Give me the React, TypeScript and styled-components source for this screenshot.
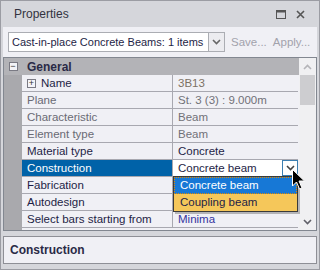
import React from 'react';
import styled, { createGlobalStyle } from 'styled-components';

const GlobalStyle = createGlobalStyle`
  html, body {
    margin: 0;
    padding: 0;
    background: #d5d6db;
  }
  * {
    box-sizing: border-box;
  }
`;

const Window = styled.div`
  position: relative;
  width: 320px;
  height: 270px;
  border: 1px solid #9b9ca3;
  background: #d5d6db;
  display: flex;
  flex-direction: column;
  font-family: 'Liberation Sans', Arial, sans-serif;
  font-size: 11px;
  color: #1e1e46;
  overflow: hidden;
`;

const TitleBar = styled.div`
  height: 26px;
  display: flex;
  align-items: center;
  justify-content: space-between;
  padding: 0 14px 0 13px;
`;

const Title = styled.span`
  font-size: 12px;
  color: #333340;
`;

const TitleButtons = styled.div`
  display: flex;
  align-items: center;
  gap: 10px;
`;

const Toolbar = styled.div`
  height: 30px;
  margin: 0 2px;
  background: #f0f0f5;
  display: flex;
  align-items: center;
  padding: 0 0 0 5px;
  gap: 6px;
`;

const Combo = styled.div`
  width: 217px;
  height: 20px;
  border: 1px solid #abadb3;
  background: #fff;
  display: flex;
  align-items: stretch;
`;

const ComboText = styled.span`
  flex: 1;
  padding-left: 3px;
  line-height: 18px;
  white-space: nowrap;
  overflow: hidden;
  color: #1e1e46;
`;

const ComboButton = styled.span`
  width: 16px;
  border-left: 1px solid #abadb3;
  background: #ececf0;
  display: flex;
  align-items: center;
  justify-content: center;
`;

const ToolLink = styled.span`
  color: #a2a2ac;
  font-size: 11.5px;
`;

const Grid = styled.div`
  margin: 0 2px;
  height: 174px;
  border: 1px solid #828790;
  background: #f0f0f5;
  display: flex;
  font-size: 11.5px;
`;

const GridBody = styled.div`
  flex: 1;
  display: flex;
  flex-direction: column;
  background: linear-gradient(to right, #a9a9ad 18px, #f0f0f5 18px);
`;

const CategoryRow = styled.div`
  height: 17px;
  display: flex;
  align-items: center;
  background: #b3b3b7;
`;

const CategoryGutter = styled.div`
  width: 18px;
  display: flex;
  justify-content: center;
`;

const Toggle = styled.span`
  width: 9px;
  height: 9px;
  border: 1px solid #7a7a84;
  background: #f4f4f8;
  display: flex;
  align-items: center;
  justify-content: center;
  font-size: 9px;
  line-height: 7px;
  color: #333;
`;

const CategoryTitle = styled.span`
  padding-left: 5px;
  font-weight: bold;
  font-size: 12px;
  color: #2a2a46;
`;

const Row = styled.div`
  height: 17px;
  display: flex;
`;

const Gutter = styled.div`
  width: 18px;
`;

const LabelCell = styled.div<{ $selected?: boolean; $readonly?: boolean }>`
  width: 151px;
  display: flex;
  align-items: center;
  gap: 5px;
  padding-left: 5px;
  border-right: 1px solid #a8a8b0;
  border-bottom: 1px solid #a8a8b0;
  background: ${p => (p.$selected ? '#0062a8' : '#f0f0f5')};
  color: ${p => (p.$selected ? '#ffffff' : p.$readonly ? '#6a6a74' : '#1e1e46')};
  white-space: nowrap;
`;

const ValueCell = styled.div<{ $color?: string; $editing?: boolean }>`
  position: relative;
  width: 125px;
  display: flex;
  align-items: center;
  justify-content: space-between;
  padding-left: 5px;
  border-bottom: 1px solid #a8a8b0;
  background: ${p => (p.$editing ? '#ffffff' : '#f0f0f5')};
  color: ${p => p.$color || '#1e1e46'};
  white-space: nowrap;
`;

const EditButton = styled.span`
  width: 16px;
  height: 16px;
  border: 1px solid #3c7fb1;
  background: #fff;
  display: flex;
  align-items: center;
  justify-content: center;
  align-self: flex-start;
`;

const DropList = styled.div`
  position: absolute;
  left: 0;
  top: 16px;
  width: 125px;
  border: 1px solid #3a3a3a;
  background: #f0f0f5;
  box-shadow: 2px 2px 0 rgba(0, 0, 0, 0.25);
  z-index: 5;
`;

const DropItem = styled.div<{ $active?: boolean }>`
  height: 17px;
  line-height: 15px;
  padding-left: 5px;
  color: ${p => (p.$active ? '#ffffff' : '#1e1e46')};
  background: ${p => (p.$active ? '#1778d6' : '#f5c75a')};
  border: 1px ${p => (p.$active ? 'dotted #e08a00' : 'solid #f5c75a')};
`;

const ScrollBar = styled.div`
  width: 17px;
  display: flex;
  flex-direction: column;
  background: #f0f0f2;
`;

const ScrollArrow = styled.div`
  height: 17px;
  display: flex;
  align-items: center;
  justify-content: center;
`;

const ScrollThumb = styled.div`
  height: 30px;
  margin: 0 1px;
  background: #cdcdd0;
`;

const ScrollTrack = styled.div`
  flex: 1;
`;

const Description = styled.div`
  margin: 5px 2px 0;
  height: 28px;
  border: 1px solid #8e8f96;
  background: #f0f0f5;
  display: flex;
  align-items: center;
  padding-left: 6px;
  font-weight: bold;
  font-size: 12px;
  color: #2a2a46;
`;

const Cursor = styled.svg`
  position: absolute;
  left: 291px;
  top: 168px;
  z-index: 10;
`;

const Chevron = ({ up, color = '#555' }: { up?: boolean; color?: string }) => (
  <svg width="9" height="6" viewBox="0 0 9 6">
    <path
      d={up ? 'M1 5 L4.5 1.5 L8 5' : 'M1 1 L4.5 4.5 L8 1'}
      fill="none"
      stroke={color}
      strokeWidth="1.6"
    />
  </svg>
);

type Prop = {
  label: string;
  value: string;
  readonly?: boolean;
  color?: string;
  expandable?: boolean;
};

const props: Prop[] = [
  { label: 'Name', value: '3B13', color: '#7d7264', expandable: true },
  { label: 'Plane', value: 'St. 3 (3) : 9.000m', readonly: true, color: '#707078' },
  { label: 'Characteristic', value: 'Beam', readonly: true, color: '#707078' },
  { label: 'Element type', value: 'Beam', readonly: true, color: '#707078' },
  { label: 'Material type', value: 'Concrete' },
  { label: 'Construction', value: 'Concrete beam' },
  { label: 'Fabrication', value: '' },
  { label: 'Autodesign', value: '' },
  { label: 'Select bars starting from', value: 'Minima', color: '#3434a0' },
];

const App = () => {
  return (
    <>
      <GlobalStyle />
      <Window>
        <TitleBar>
          <Title>Properties</Title>
          <TitleButtons>
            <svg width="10" height="9" viewBox="0 0 10 9">
              <rect x="0.5" y="0.5" width="9" height="8" fill="none" stroke="#555" />
              <line x1="0" y1="1.5" x2="10" y2="1.5" stroke="#555" strokeWidth="2" />
            </svg>
            <svg width="9" height="9" viewBox="0 0 9 9">
              <path d="M1 1 L8 8 M8 1 L1 8" stroke="#555" strokeWidth="1.6" />
            </svg>
          </TitleButtons>
        </TitleBar>

        <Toolbar>
          <Combo>
            <ComboText>Cast-in-place Concrete Beams: 1 items</ComboText>
            <ComboButton>
              <Chevron color="#666" />
            </ComboButton>
          </Combo>
          <ToolLink>Save...</ToolLink>
          <ToolLink>Apply...</ToolLink>
        </Toolbar>

        <Grid>
          <GridBody>
            <CategoryRow>
              <CategoryGutter>
                <Toggle>−</Toggle>
              </CategoryGutter>
              <CategoryTitle>General</CategoryTitle>
            </CategoryRow>
            {props.map(p => {
              const selected = p.label === 'Construction';
              return (
                <Row key={p.label}>
                  <Gutter />
                  <LabelCell $selected={selected} $readonly={p.readonly}>
                    {p.expandable && <Toggle>+</Toggle>}
                    {p.label}
                  </LabelCell>
                  <ValueCell $color={p.color} $editing={selected}>
                    {p.value}
                    {selected && (
                      <>
                        <EditButton>
                          <Chevron color="#444" />
                        </EditButton>
                        <DropList>
                          <DropItem $active>Concrete beam</DropItem>
                          <DropItem>Coupling beam</DropItem>
                        </DropList>
                      </>
                    )}
                  </ValueCell>
                </Row>
              );
            })}
          </GridBody>
          <ScrollBar>
            <ScrollArrow>
              <Chevron up color="#b4b4b8" />
            </ScrollArrow>
            <ScrollThumb />
            <ScrollTrack />
            <ScrollArrow>
              <Chevron color="#606068" />
            </ScrollArrow>
          </ScrollBar>
        </Grid>

        <Description>Construction</Description>

        <Cursor width="13" height="21" viewBox="0 0 13 21">
          <path
            d="M0.5 0.5 L0.5 17 L4.5 13 L7.5 20 L10 19 L7 12 L12.5 12 Z"
            fill="#000"
            stroke="#fff"
            strokeWidth="1"
          />
        </Cursor>
      </Window>
    </>
  );
};

export default App;
